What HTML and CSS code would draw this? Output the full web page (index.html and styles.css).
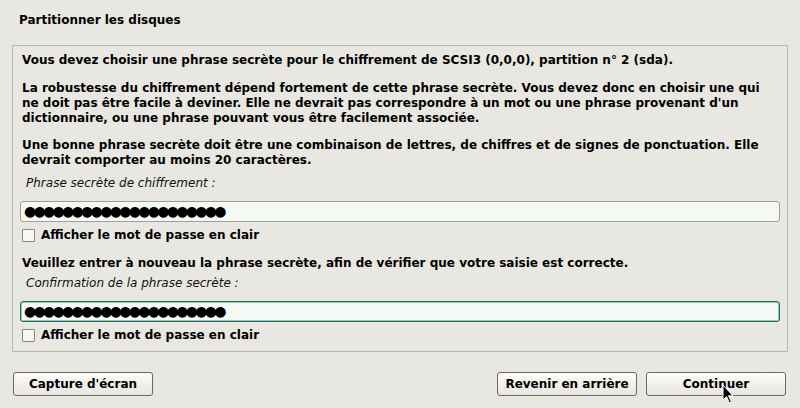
FILE: index.html
```html
<!DOCTYPE html>
<html lang="fr">
<head>
<meta charset="utf-8">
<title>Partitionner les disques</title>
<link rel="stylesheet" href="styles.css">
</head>
<body>
<div class="window">
  <h1 class="title">Partitionner les disques</h1>
  <div class="panel">
    <p class="p1">Vous devez choisir une phrase secrète pour le chiffrement de SCSI3 (0,0,0), partition n° 2 (sda).</p>
    <p class="p2">La robustesse du chiffrement dépend fortement de cette phrase secrète. Vous devez donc en choisir une qui<br>ne doit pas être facile à deviner. Elle ne devrait pas correspondre à un mot ou une phrase provenant d'un<br>dictionnaire, ou une phrase pouvant vous être facilement associée.</p>
    <p class="p3">Une bonne phrase secrète doit être une combinaison de lettres, de chiffres et de signes de ponctuation. Elle<br>devrait comporter au moins 20 caractères.</p>
    <div class="hint hint1">Phrase secrète de chiffrement :</div>
    <div class="input">●●●●●●●●●●●●●●●●●●●●●</div>
    <label class="check"><span class="box"></span>Afficher le mot de passe en clair</label>
    <p class="p4">Veuillez entrer à nouveau la phrase secrète, afin de vérifier que votre saisie est correcte.</p>
    <div class="hint hint2">Confirmation de la phrase secrète :</div>
    <div class="input focused">●●●●●●●●●●●●●●●●●●●●●</div>
    <label class="check"><span class="box"></span>Afficher le mot de passe en clair</label>
  </div>
  <div class="buttons">
    <button class="btn">Capture d'écran</button>
    <span class="spacer"></span>
    <button class="btn">Revenir en arrière</button>
    <button class="btn">Continuer</button>
  </div>
  <svg class="cursor" width="13" height="20" viewBox="0 0 13 20">
    <path d="M1 1 L1 16 L4.5 12.5 L7.5 19 L9.5 18 L6.5 11.8 L11 11.8 Z" fill="#000" stroke="#fff" stroke-width="1"/>
  </svg>
</div>
</body>
</html>
```

FILE: styles.css
```css
html, body {
  margin: 0;
  padding: 0;
  background: #e8e7e1;
}

.window {
  position: relative;
  width: 800px;
  height: 408px;
  font-family: "DejaVu Sans", "Liberation Sans", sans-serif;
  font-size: 12px;
  line-height: 15px;
  color: #000;
  background: #e8e7e1;
  overflow: hidden;
}

.title {
  margin: 0;
  padding: 13px 19px 0;
  height: 32px;
  font-size: 12px;
  font-weight: bold;
  line-height: 15px;
}

.panel {
  margin: 0 12px;
  border: 1px solid #bbb6a9;
  padding: 7px 7px 8px 7px;
  height: 307px;
  box-sizing: border-box;
}

.panel p {
  margin: 0 0 12px 2px;
  font-weight: bold;
}

.panel .p1 {
  margin-bottom: 13px;
}

.panel .p3 {
  margin-bottom: 8px;
}

.panel .p4 {
  margin-top: 13px;
  margin-bottom: 5px;
}

.hint {
  font-style: italic;
  margin-left: 6px;
  color: #111;
}

.input {
  margin-top: 10px;
  height: 21px;
  box-sizing: border-box;
  border: 1px solid #a39e92;
  border-radius: 3px;
  background: #f5f9f6;
  padding: 0 0 0 3px;
  font-size: 14px;
  line-height: 19px;
  letter-spacing: -2.7px;
  white-space: nowrap;
  overflow: hidden;
}

.input.focused {
  border-color: #2c665d;
  box-shadow: inset 0 0 0 1px #8fcfc2;
}

.check {
  display: flex;
  align-items: center;
  margin-top: 6px;
  height: 15px;
  font-weight: bold;
}

.box {
  width: 11px;
  height: 11px;
  border: 1px solid #8c877c;
  border-radius: 1px;
  background: #f7f7f3;
  margin: 0 6px 0 2px;
  flex: none;
}

.buttons {
  display: flex;
  align-items: center;
  gap: 9px;
  padding: 20px 14px 0 13px;
}

.spacer {
  flex: 1;
}

.btn {
  width: 140px;
  height: 24px;
  border: 1px solid #6e675d;
  border-radius: 3px;
  background: linear-gradient(#fbfbf9, #e7e6e1);
  font-family: "DejaVu Sans", "Liberation Sans", sans-serif;
  font-size: 12px;
  font-weight: bold;
  color: #000;
  padding: 0;
}

.cursor {
  position: absolute;
  left: 722px;
  top: 384px;
}
```
